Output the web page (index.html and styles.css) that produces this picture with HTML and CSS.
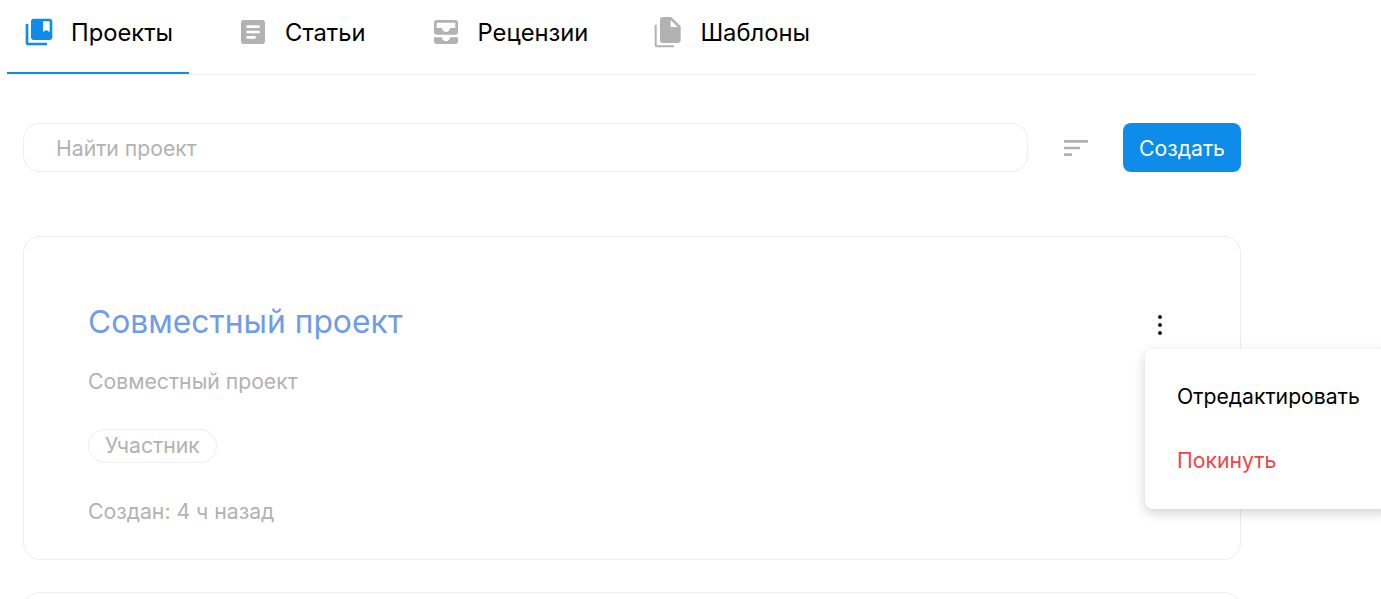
FILE: index.html
```html
<!DOCTYPE html>
<html lang="ru">
<head>
  <meta charset="UTF-8" />
  <title>Проекты</title>
  <link rel="stylesheet" href="styles.css">
</head>
<body>

  <div class="page">
    <nav class="tabs">
      <a class="tab active">
        <svg class="tab-icon" viewBox="0 0 24 24"><path d="M4 6H2v14c0 1.1.9 2 2 2h14v-2H4V6z"/><path d="M20 2H8c-1.1 0-2 .9-2 2v12c0 1.1.9 2 2 2h12c1.1 0 2-.9 2-2V4c0-1.1-.9-2-2-2zm0 10l-2.5-1.5L15 12V4h5v8z"/></svg>
        Проекты
      </a>
      <a class="tab">
        <svg class="tab-icon" viewBox="0 0 24 24"><path d="M19 3H5c-1.1 0-2 .9-2 2v14c0 1.1.9 2 2 2h14c1.1 0 2-.9 2-2V5c0-1.1-.9-2-2-2zm-5 14H7v-2h7v2zm3-4H7v-2h10v2zm0-4H7V7h10v2z"/></svg>
        Статьи
      </a>
      <a class="tab">
        <svg class="tab-icon" viewBox="0 0 24 24"><path d="M19 3H5c-1.1 0-2 .9-2 2v7c0 1.1.9 2 2 2h14c1.1 0 2-.9 2-2V5c0-1.1-.9-2-2-2zm0 6h-4c0 1.62-1.38 3-3 3s-3-1.38-3-3H5V5h14v4zm-4 7h6v3c0 1.1-.9 2-2 2H5c-1.1 0-2-.9-2-2v-3h6c0 1.66 1.34 3 3 3s3-1.34 3-3z"/></svg>
        Рецензии
      </a>
      <a class="tab">
        <svg class="tab-icon" viewBox="0 0 24 24"><path d="M3.5 6.5H2V22c0 .8.7 1.5 1.5 1.5h13V22h-13V6.5z"/><path fill-rule="evenodd" d="M14.5.75H8c-1.1 0-2 .9-2 2v15.5c0 1.1.9 2 2 2h11.5c1.1 0 2-.9 2-2V7.75l-7-7zM14 3v5.25h5.25L14 3z"/></svg>
        Шаблоны
      </a>
    </nav>

    <div class="content">
      <div class="toolbar">
        <input class="search" type="text" placeholder="Найти проект" />
        <svg class="sort-icon" viewBox="0 0 24 24"><path d="M3 18h6v-2H3v2zM3 6v2h18V6H3zm0 7h12v-2H3v2z"/></svg>
        <button class="btn">Создать</button>
      </div>

      <div class="card">
        <div class="card-head">
          <h2 class="card-title">Совместный проект</h2>
          <svg class="more-icon" viewBox="0 0 24 24"><circle cx="12" cy="4" r="1.9"/><circle cx="12" cy="12" r="1.9"/><circle cx="12" cy="20" r="1.9"/></svg>
        </div>
        <p class="card-desc">Совместный проект</p>
        <span class="tag">Участник</span>
        <p class="card-date">Создан: 4 ч назад</p>
      </div>

      <div class="card"></div>
    </div>
  </div>

  <div class="menu">
    <a class="menu-item">Отредактировать</a>
    <a class="menu-item danger">Покинуть</a>
  </div>

</body>
</html>
```

FILE: styles.css
```css
html, body {
  height: 100%;
  overflow: hidden;
}

body {
  margin: 0;
  font-family: 'Inter', 'Noto Sans', sans-serif;
  background: #fff;
  color: #000;
}

.page {
  width: 1249px;
  margin-left: 7px;
}

.tabs {
  display: flex;
  gap: 32px;
  height: 74px;
  border-bottom: 1px solid #eee;
}

.tab {
  display: flex;
  align-items: center;
  gap: 16px;
  height: 74px;
  padding: 0 16px 10px;
  box-sizing: border-box;
  font-size: 23.75px;
  fill: #b2b2b2;
}

.tab.active {
  fill: #0d8ce9;
  border-bottom: 2px solid #0d8ce9;
  padding-bottom: 8px;
}

.tab-icon {
  width: 32px;
  height: 32px;
}

.content {
  padding: 48px 15px 0 16px;
}

.toolbar {
  display: flex;
  align-items: center;
  height: 49px;
}

.search {
  width: 1005px;
  height: 49px;
  box-sizing: border-box;
  padding: 0 32px;
  border: 1px solid #eee;
  border-radius: 16px;
  font-family: inherit;
  font-size: 21.2px;
  outline: none;
}

.search::placeholder {
  color: #b2b2b2;
  opacity: 1;
}

.sort-icon {
  width: 32px;
  height: 32px;
  margin-left: 32px;
  fill: #b2b2b2;
}

.btn {
  margin-left: auto;
  width: 118px;
  height: 49px;
  padding: 0;
  border: none;
  border-radius: 8px;
  background: #0d8ce9;
  color: #fff;
  font-family: inherit;
  font-size: 21.2px;
}

.card {
  box-sizing: border-box;
  height: 324px;
  margin-top: 32px;
  padding: 64px;
  border: 1px solid #eee;
  border-radius: 16px;
}

.toolbar + .card {
  margin-top: 64px;
}

.card-head {
  display: flex;
  align-items: center;
  justify-content: space-between;
  height: 40px;
}

.card-title {
  margin: 0;
  font-size: 31.8px;
  font-weight: 400;
  color: #6f9ce8;
}

.more-icon {
  width: 24px;
  height: 24px;
  margin-right: 4px;
  margin-top: 8px;
}

.card-desc {
  margin: 27px 0 0;
  font-size: 21.2px;
  line-height: 26px;
  color: #b2b2b2;
}

.tag {
  display: inline-block;
  box-sizing: border-box;
  height: 34px;
  margin-top: 35px;
  padding: 0 16px;
  border: 1px solid #eee;
  border-radius: 17px;
  font-size: 21.2px;
  line-height: 30px;
  color: #b2b2b2;
}

.card-date {
  margin: 35px 0 0;
  font-size: 21.2px;
  line-height: 26px;
  color: #b2b2b2;
}

.menu {
  position: absolute;
  top: 349px;
  left: 1145px;
  box-sizing: border-box;
  width: 246px;
  height: 160px;
  padding: 15px 0 17px;
  border-radius: 8px;
  background: #fff;
  box-shadow: 0 4px 12px rgba(0, 0, 0, 0.18);
}

.menu-item {
  display: block;
  height: 64px;
  padding: 0 32px;
  font-size: 21.2px;
  line-height: 64px;
}

.menu-item.danger {
  color: #ef4444;
}
```
